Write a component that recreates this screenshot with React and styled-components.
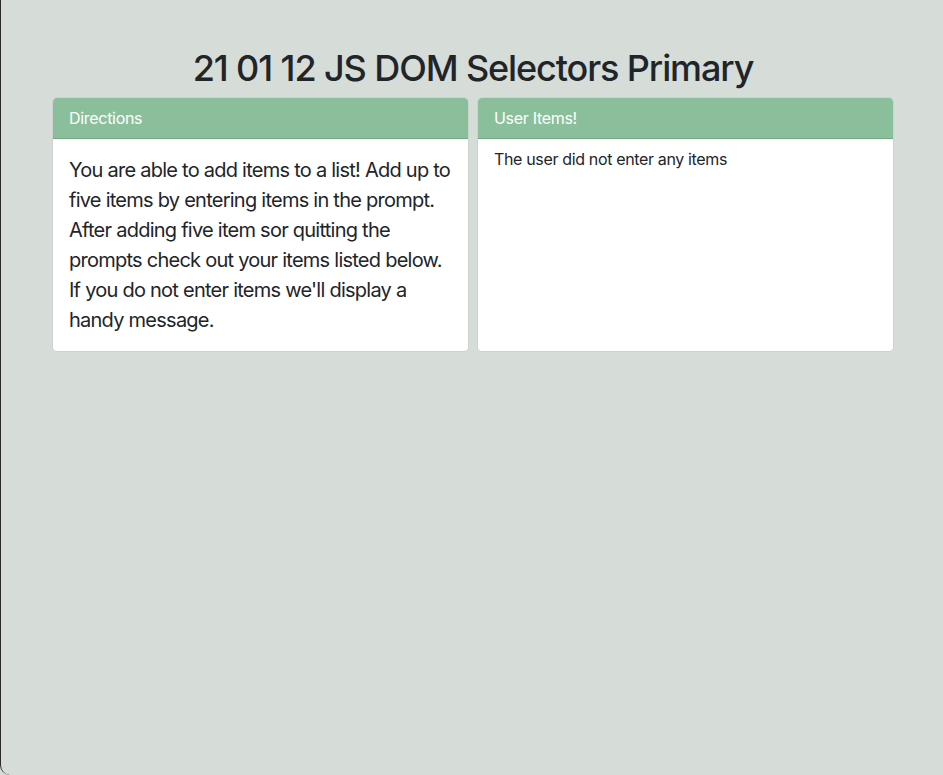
import React from "react";
import styled, { createGlobalStyle } from "styled-components";

const GlobalStyle = createGlobalStyle`
  html, body {
    margin: 0;
    padding: 0;
    background: #d6dcd8;
  }
  * {
    box-sizing: border-box;
  }
`;

const Frame = styled.div`
  width: 943px;
  height: 775px;
  background-color: #d6dcd8;
  border-left: 1px solid #2a2a2a;
  border-bottom-left-radius: 10px;
  border-bottom-right-radius: 10px;
  font-family: Inter, "Liberation Sans", sans-serif;
  color: #212529;
  overflow: hidden;
`;

const Container = styled.div`
  width: 840px;
  margin-left: 52px;
  padding-top: 46px;
`;

const Title = styled.h1`
  margin: 0 0 8px;
  font-size: 36px;
  font-weight: 500;
  line-height: 44px;
  text-align: center;
  letter-spacing: -1.1px;
`;

const Row = styled.div`
  display: grid;
  grid-template-columns: 1fr 1fr;
  gap: 10px;
`;

const Card = styled.div`
  background: #fff;
  border-radius: 4px;
  box-shadow: 0 0 0 1px rgba(0, 0, 0, 0.04);
  overflow: hidden;
  display: flex;
  flex-direction: column;
  height: 253px;
`;

const CardHeader = styled.div`
  background: #8bbf9b;
  color: #fff;
  font-size: 16px;
  line-height: 24px;
  padding: 8px 16px;
  letter-spacing: -0.3px;
  border-bottom: 1px solid #76a985;
`;

const CardBody = styled.div`
  padding: ${(p) => (p.$lead ? "16px" : "8px 16px")};
  font-size: ${(p) => (p.$lead ? "20px" : "16px")};
  line-height: ${(p) => (p.$lead ? "30px" : "24px")};
  letter-spacing: ${(p) => (p.$lead ? "-0.75px" : "-0.35px")};
  flex: 1;
`;

const Text = styled.p`
  margin: 0;
`;

const App = () => {
  return (
    <Frame>
      <GlobalStyle />
      <Container>
        <Title>21 01 12 JS DOM Selectors Primary</Title>
        <Row>
          <Card>
            <CardHeader>Directions</CardHeader>
            <CardBody $lead>
              <Text>
                You are able to add items to a list! Add up to five items by
                entering items in the prompt. After adding five item sor
                quitting the prompts check out your items listed below. If you
                do not enter items we'll display a handy message.
              </Text>
            </CardBody>
          </Card>
          <Card>
            <CardHeader>User Items!</CardHeader>
            <CardBody>
              <Text>The user did not enter any items</Text>
            </CardBody>
          </Card>
        </Row>
      </Container>
    </Frame>
  );
};

export default App;
